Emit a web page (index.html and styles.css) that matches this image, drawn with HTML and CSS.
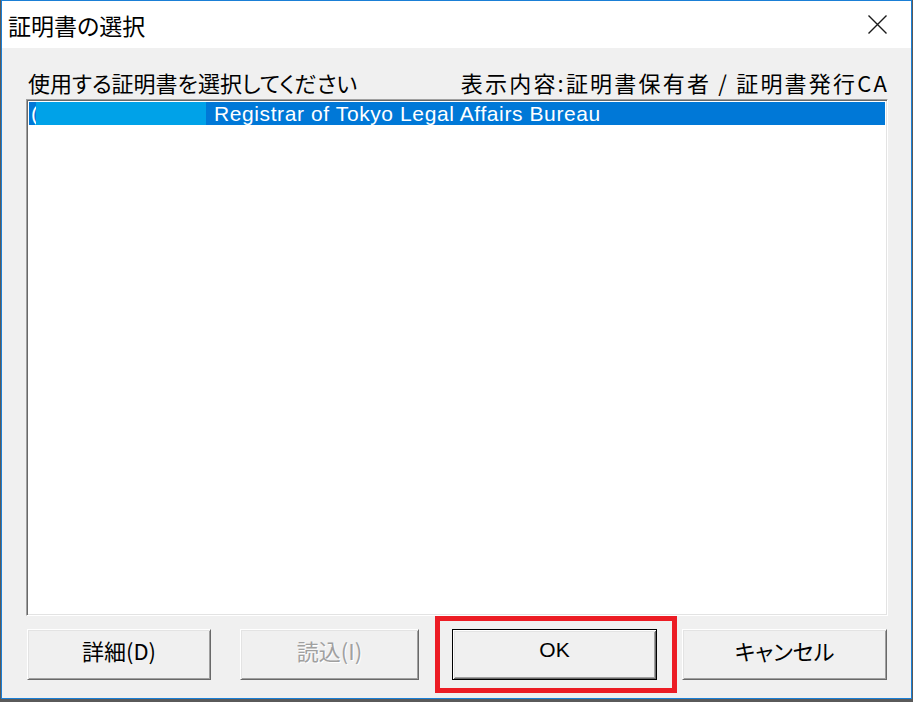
FILE: index.html
```html
<!DOCTYPE html>
<html lang="ja">
<head>
<meta charset="utf-8">
<title>証明書の選択</title>
<link rel="stylesheet" href="styles.css">
</head>
<body>
<div class="window">
  <div class="titlebar">
    <span class="title">証明書の選択</span>
    <span class="close">
      <svg width="19" height="19" viewBox="0 0 19 19"><path d="M0.5 0.5 L18.5 18.5 M18.5 0.5 L0.5 18.5" stroke="#1a1a1a" stroke-width="1.4" fill="none"/></svg>
    </span>
  </div>
  <div class="content">
    <div class="labels">
      <span class="label">使用する証明書を選択してください</span>
      <span class="label label-right">表示内容:証明書保有者 / 証明書発行CA</span>
    </div>
    <div class="listbox">
      <div class="row selected">
        <span class="paren">(</span>
        <span class="redact"></span>
        <span class="issuer">Registrar of Tokyo Legal Affairs Bureau</span>
      </div>
    </div>
    <div class="buttons">
      <button class="btn btn-detail">詳細(D)</button>
      <button class="btn btn-load" disabled>読込(I)</button>
      <div class="ok-wrap">
        <button class="btn btn-ok">OK</button>
        <span class="highlight"></span>
      </div>
      <button class="btn btn-cancel">キャンセル</button>
    </div>
  </div>
</div>
</body>
</html>
```
FILE: styles.css
```css
html, body {
  margin: 0;
  padding: 0;
}
body {
  background: #5a5a5a;
  width: 913px;
  height: 702px;
  overflow: hidden;
  font-family: "Noto Sans CJK JP", "Liberation Sans", sans-serif;
}
.window {
  margin-left: 1px;
  width: 909px;
  height: 697px;
  border: 1px solid #1a7fd6;
  background: #f0f0f0;
  display: flex;
  flex-direction: column;
}
.titlebar {
  height: 47px;
  background: #ffffff;
  display: flex;
  align-items: center;
  justify-content: space-between;
  padding: 0 24px 0 6px;
}
.title {
  font-size: 23px;
  color: #000;
  line-height: 26px;
  margin-top: 1px;
  font-feature-settings: "palt";
}
.close {
  display: flex;
  margin-top: -1px;
}
.content {
  flex: 1;
  display: flex;
  flex-direction: column;
  padding: 18px 23px 0 24px;
}
.labels {
  display: flex;
  justify-content: space-between;
  height: 33px;
}
.label {
  font-size: 22px;
  line-height: 32px;
  color: #000;
  margin-left: 2px;
  font-feature-settings: "palt";
}
.label-right {
  font-feature-settings: normal;
  letter-spacing: 2.2px;
  margin-right: -1px;
}
.listbox {
  height: 511px;
  background: #fff;
  border: 1px solid;
  border-color: #a0a0a0 #ffffff #ffffff #a0a0a0;
  box-shadow: inset 1px 1px 0 #696969, inset -1px -1px 0 #e3e3e3;
  padding: 2px;
}
.row {
  height: 23px;
  display: flex;
  align-items: center;
  font-family: "Liberation Sans", "Noto Sans CJK JP", sans-serif;
  font-size: 21px;
  color: #fff;
}
.selected {
  background: #0078d7;
}
.paren {
  width: 5px;
  padding-left: 2px;
}
.redact {
  width: 170px;
  height: 23px;
  background: #00a2e8;
}
.issuer {
  margin-left: 8px;
  letter-spacing: 0.6px;
}
.buttons {
  display: flex;
  align-items: flex-start;
  margin-top: 13px;
}
.btn {
  height: 51px;
  background: #f0f0f0;
  border: 1px solid;
  border-color: #ffffff #696969 #696969 #ffffff;
  box-shadow: inset 1px 1px 0 #e3e3e3, inset -1px -1px 0 #a0a0a0;
  font-family: "Noto Sans CJK JP", "Liberation Sans", sans-serif;
  font-size: 22px;
  line-height: 26px;
  color: #000;
  padding: 0 0 10px 0;
  font-feature-settings: "palt";
}
.btn-detail {
  width: 184px;
  margin-left: 1px;
}
.btn-load {
  width: 179px;
  margin-left: 29px;
  color: #a0a0a0;
  text-shadow: 1px 1px 0 #ffffff;
}
.ok-wrap {
  position: relative;
  margin-left: 33px;
  display: flex;
}
.btn-ok {
  width: 205px;
  border-color: #000 #000 #000 #000;
  box-shadow: inset 1px 1px 0 #ffffff, inset -1px -1px 0 #696969, inset 2px 2px 0 #e3e3e3, inset -2px -2px 0 #a0a0a0;
  font-family: "Liberation Sans", sans-serif;
  font-size: 21px;
}
.highlight {
  position: absolute;
  left: -17px;
  top: -13px;
  right: -20px;
  bottom: -13px;
  border: 5px solid #ec1c24;
  pointer-events: none;
}
.btn-cancel {
  width: 205px;
  margin-left: 25px;
}
```
